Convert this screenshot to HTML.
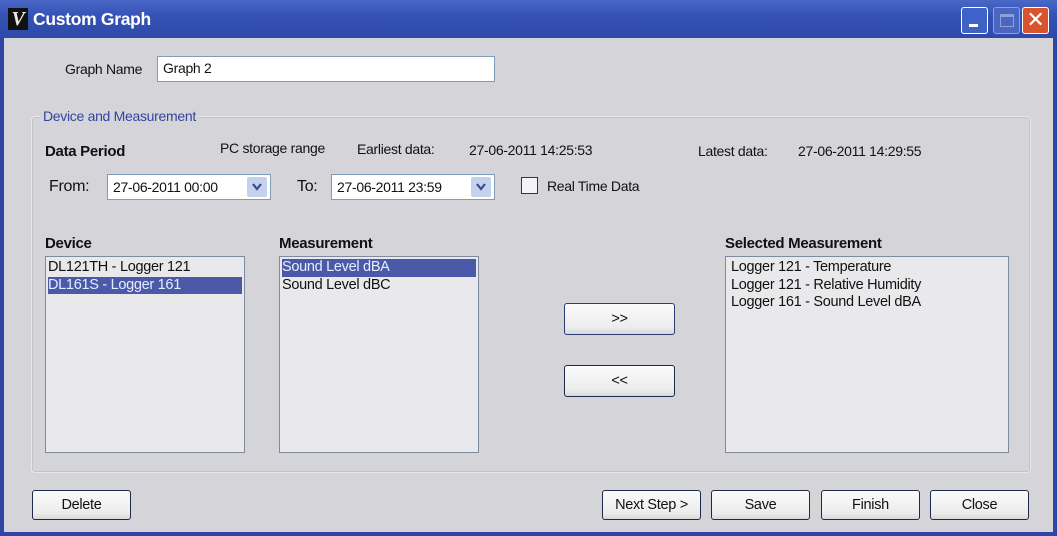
<!DOCTYPE html>
<html><head><style>
*{margin:0;padding:0;box-sizing:border-box}
body{width:1057px;height:536px;overflow:hidden;background:#2f46a6;font-family:"Liberation Sans",sans-serif;font-size:14px;letter-spacing:-0.3px;color:#111;position:relative}
.a{position:absolute}
#title{left:0;top:0;width:1057px;height:38px;background:linear-gradient(#4a68c8,#3552b4 40%,#2e49a8);}
#client{left:4px;top:38px;width:1049px;height:494px;background:#d5d5d9}
.tb{border:1px solid #7f9db9;background:#fff}
.lb{border:1px solid #7f8aa0;background:#e9e9eb;padding:2px 2px;font-size:14.5px;line-height:17.5px}
.sel{background:#4b5aa8;color:#e8ecff}
.btn{border:1px solid #1f2a4a;border-radius:3px;background:linear-gradient(#fbfbfb,#ececec 80%,#d8d8d8);text-align:center;font-size:14.5px;line-height:28px}
.dd{width:20px;height:20px;top:2px;right:3px;background:#c5d2ee;border-radius:2px}
.dd svg{position:absolute;left:4px;top:5px}
</style></head><body>
<div id="title" class="a"></div>
<div class="a" style="left:8px;top:8px;width:20px;height:22px;background:#111;color:#e8e8e8;font:bold italic 20px 'Liberation Serif',serif;line-height:22px;text-align:center">V</div>
<div class="a" style="left:33px;top:9px;color:#fff;font-weight:bold;font-size:17.5px">Custom Graph</div>
<div class="a" style="left:961px;top:7px;width:27px;height:27px;border:1px solid #fff;border-radius:3px;background:#3f62c8"><div class="a" style="left:7px;top:16px;width:9px;height:3px;background:#fff"></div></div>
<div class="a" style="left:993px;top:7px;width:27px;height:27px;border:1px solid #8ea0d8;border-radius:3px;background:#4a66c2"><div class="a" style="left:6px;top:6px;width:14px;height:13px;border:1px solid #8ea0d8;border-top-width:3px"></div></div>
<div class="a" style="left:1022px;top:7px;width:27px;height:27px;border:1px solid #fff;border-radius:3px;background:#d9542c;color:#fff;font-size:22px;line-height:24px;text-align:center">✕</div>
<div id="client" class="a"></div>

<div class="a" style="left:65px;top:61px">Graph Name</div>
<div class="a tb" style="left:157px;top:56px;width:338px;height:26px;padding:3px 5px">Graph 2</div>

<div class="a" style="left:31px;top:116px;width:1000px;height:357px;border:1px solid #e8e8ea;border-radius:4px;box-shadow:inset 0 0 0 1px #c4c4c8"></div>
<div class="a" style="left:40px;top:108px;background:#d5d5d9;padding:0 3px;color:#3344a0">Device and Measurement</div>

<div class="a" style="left:45px;top:143px;font-size:15px;font-weight:bold">Data Period</div>
<div class="a" style="left:220px;top:140px">PC storage range</div>
<div class="a" style="left:357px;top:141px">Earliest data:</div>
<div class="a" style="left:469px;top:142px">27-06-2011 14:25:53</div>
<div class="a" style="left:698px;top:143px">Latest data:</div>
<div class="a" style="left:798px;top:143px">27-06-2011 14:29:55</div>

<div class="a" style="left:49px;top:178px;font-size:16px">From:</div>
<div class="a tb" style="left:107px;top:174px;width:164px;height:26px;padding:4px 5px">27-06-2011 00:00<div class="a dd"><svg width="12" height="10"><path d="M2 2 L6 7 L10 2" stroke="#3a4a88" stroke-width="2.2" fill="none"/></svg></div></div>
<div class="a" style="left:297px;top:178px;font-size:16px">To:</div>
<div class="a tb" style="left:331px;top:174px;width:164px;height:26px;padding:4px 5px">27-06-2011 23:59<div class="a dd"><svg width="12" height="10"><path d="M2 2 L6 7 L10 2" stroke="#3a4a88" stroke-width="2.2" fill="none"/></svg></div></div>
<div class="a" style="left:521px;top:177px;width:17px;height:17px;border:1px solid #1c3a6e;background:#f4f4f4"></div>
<div class="a" style="left:547px;top:178px">Real Time Data</div>

<div class="a" style="left:45px;top:235px;font-size:15px;font-weight:bold">Device</div>
<div class="a lb" style="left:45px;top:256px;width:200px;height:197px"><div>DL121TH - Logger 121</div><div class="sel">DL161S - Logger 161</div></div>
<div class="a" style="left:279px;top:235px;font-size:15px;font-weight:bold">Measurement</div>
<div class="a lb" style="left:279px;top:256px;width:200px;height:197px"><div class="sel">Sound Level dBA</div><div>Sound Level dBC</div></div>
<div class="a" style="left:725px;top:235px;font-size:15px;font-weight:bold">Selected Measurement</div>
<div class="a lb" style="left:725px;top:256px;width:284px;height:197px;padding-left:5px"><div>Logger 121 - Temperature</div><div>Logger 121 - Relative Humidity</div><div>Logger 161 - Sound Level dBA</div></div>

<div class="a btn" style="left:564px;top:303px;width:111px;height:32px;border-color:#2a3c78;line-height:30px">&gt;&gt;</div>
<div class="a btn" style="left:564px;top:365px;width:111px;height:32px;line-height:30px">&lt;&lt;</div>

<div class="a btn" style="left:32px;top:490px;width:99px;height:30px">Delete</div>
<div class="a btn" style="left:602px;top:490px;width:99px;height:30px">Next Step &gt;</div>
<div class="a btn" style="left:711px;top:490px;width:99px;height:30px">Save</div>
<div class="a btn" style="left:821px;top:490px;width:99px;height:30px">Finish</div>
<div class="a btn" style="left:930px;top:490px;width:99px;height:30px">Close</div>
</body></html>
